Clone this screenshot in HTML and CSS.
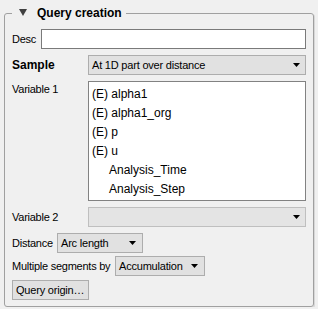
FILE: index.html
```html
<!DOCTYPE html>
<html lang="en">
<head>
  <meta charset="UTF-8">
  <title>Query creation</title>
  <link rel="stylesheet" href="styles.css">
</head>
<body>
  <fieldset class="group">
    <legend class="group-title">
      <svg class="collapse-arrow" width="8" height="7" viewBox="0 0 8 7"><path d="M0 0H8L4 7Z"/></svg>Query creation
    </legend>

    <!-- Description -->
    <div class="row desc-row">
      <label class="label desc-label" for="desc">Desc</label>
      <input class="text-field" id="desc" type="text">
    </div>

    <!-- Sample and variables -->
    <div class="form-grid">
      <span class="label strong">Sample</span>
      <div class="combo">
        <span>At 1D part over distance</span>
        <svg class="drop-arrow" width="7" height="4" viewBox="0 0 7 4"><path d="M0 0H7L3.5 4Z"/></svg>
      </div>

      <span class="label label-top">Variable 1</span>
      <ul class="list">
        <li>(E) alpha1</li>
        <li>(E) alpha1_org</li>
        <li>(E) p</li>
        <li>(E) u</li>
        <li class="indent">Analysis_Time</li>
        <li class="indent">Analysis_Step</li>
      </ul>

      <span class="label">Variable 2</span>
      <div class="combo combo-disabled">
        <span></span>
        <svg class="drop-arrow" width="7" height="4" viewBox="0 0 7 4"><path d="M0 0H7L3.5 4Z"/></svg>
      </div>
    </div>

    <div class="row distance-row">
      <span class="label distance-label">Distance</span>
      <div class="combo combo-distance">
        <span>Arc length</span>
        <svg class="drop-arrow" width="7" height="4" viewBox="0 0 7 4"><path d="M0 0H7L3.5 4Z"/></svg>
      </div>
    </div>

    <div class="row segments-row">
      <span class="label segments-label">Multiple segments by</span>
      <div class="combo combo-segments">
        <span>Accumulation</span>
        <svg class="drop-arrow" width="7" height="4" viewBox="0 0 7 4"><path d="M0 0H7L3.5 4Z"/></svg>
      </div>
    </div>

    <button class="push-button" type="button">Query origin…</button>
  </fieldset>
</body>
</html>
```

FILE: styles.css
```css
body {
  margin: 0;
  background-color: #f0f0f0;
  font-family: "Liberation Sans", Arial, sans-serif;
  font-size: 11px;
  color: #000;
}
.group {
  margin: 4px 4px 0 4px;
  padding: 7px 7px 6px 7px;
  border: 1px solid #a0a0a0;
  border-radius: 3px;
  box-shadow: 1px 1px 0 #d8d8d8;
  height: 303px;
  box-sizing: border-box;
}
.group-title {
  padding: 0 4px 0 7px;
  font-size: 12px;
  font-weight: bold;
  line-height: 18px;
}
.collapse-arrow {
  fill: #404040;
  margin-right: 10px;
  vertical-align: 1px;
}
.row {
  display: flex;
  align-items: center;
}
.label {
  line-height: 14px;
  white-space: nowrap;
  letter-spacing: -0.25px;
}
.strong {
  font-size: 12px;
  font-weight: bold;
  letter-spacing: 0;
}
.desc-label {
  width: 29px;
  flex: none;
}
.text-field {
  flex: 1;
  min-width: 0;
  height: 20px;
  box-sizing: border-box;
  margin: 0;
  border: 1px solid #7a7a7a;
  background: #fff;
  font: inherit;
}
.form-grid {
  display: grid;
  grid-template-columns: 76px 1fr;
  row-gap: 6px;
  align-items: center;
  margin-top: 6px;
}
.label-top {
  align-self: start;
  margin-top: 1px;
}
.combo {
  height: 20px;
  box-sizing: border-box;
  border: 1px solid #adadad;
  background-color: #e1e1e1;
  padding: 0 5px 0 3px;
  display: flex;
  align-items: center;
  justify-content: space-between;
  white-space: nowrap;
  letter-spacing: -0.2px;
}
.combo-disabled {
  border-color: #bfbfbf;
  background-color: #e4e4e4;
}
.drop-arrow {
  fill: #000;
  flex: none;
}
.list {
  list-style: none;
  margin: 0;
  padding: 3px 0;
  height: 120px;
  box-sizing: border-box;
  border: 1px solid #828282;
  background: #fff;
  font-size: 12px;
  line-height: 19px;
}
.list li {
  padding-left: 3px;
}
.list li.indent {
  padding-left: 20px;
}
.distance-row {
  margin-top: 6px;
}
.distance-label {
  width: 45px;
  flex: none;
}
.combo-distance {
  width: 86px;
  padding-right: 6px;
}
.segments-row {
  margin-top: 3px;
}
.segments-label {
  width: 103px;
  flex: none;
}
.combo-segments {
  width: 90px;
  padding-right: 6px;
}
.push-button {
  display: block;
  margin-top: 4px;
  width: 77px;
  height: 20px;
  padding: 0 3px;
  border: 1px solid #adadad;
  background-color: #e1e1e1;
  font: inherit;
  color: #000;
  text-align: left;
  white-space: nowrap;
  letter-spacing: -0.2px;
}
```
